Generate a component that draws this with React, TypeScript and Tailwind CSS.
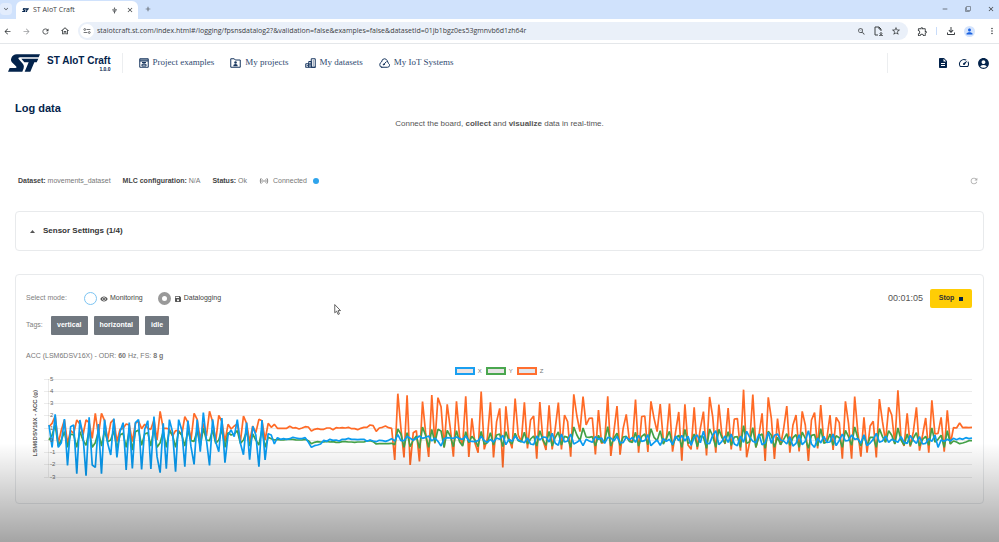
import React, { useState } from "react";
import {
  MdAccountCircle,
  MdArrowBack,
  MdArrowForward,
  MdClose,
  MdDescription,
  MdExpandMore,
  MdMoreVert,
  MdOutlineExtension,
  MdOutlineFileDownload,
  MdOutlineHome,
  MdOutlineSpeed,
  MdPerson,
  MdRefresh,
  MdSave,
  MdSensors,
  MdStarOutline,
  MdUsb,
  MdVisibility,
  MdZoomOut,
  MdAdd,
  MdRemove,
  MdFilterNone,
} from "react-icons/md";

type IconProps = { className?: string };

// Raw plot rows, 240 is 0 g and one g is 36.7 rows
const Z_ROWS = [
  200, 190, 168, 250, 210, 180, 250, 212, 220, 180, 192, 225, 180, 188, 235, 160, 225, 160, 182, 240,
  188, 178, 245, 208, 205, 192, 195, 245, 190, 183, 206, 193, 205, 208, 180, 240, 154, 205, 205, 207,
  228, 212, 212, 225, 170, 187, 240, 160, 178, 240, 190, 228, 154, 185, 245, 166, 185, 245, 193, 207,
  198, 192, 245, 168, 190, 245, 198, 218, 178, 182, 240, 190, 202, 193, 205, 205, 205, 205, 199, 204,
  203, 207, 204, 200, 201, 213, 208, 206, 208, 208, 204, 204, 209, 203, 204, 203, 204, 202, 206, 206,
  209, 205, 202, 202, 195, 197, 214, 204, 202, 198, 203, 205, 300, 101, 205, 292, 106, 315, 218, 212,
  304, 125, 218, 291, 105, 250, 113, 140, 262, 133, 205, 290, 124, 230, 255, 109, 291, 175, 250, 278,
  95, 268, 235, 127, 292, 185, 145, 322, 139, 235, 265, 116, 225, 245, 127, 265, 180, 168, 296, 126,
  240, 270, 136, 268, 205, 128, 268, 165, 185, 290, 103, 168, 215, 110, 195, 175, 174, 283, 150, 250,
  245, 109, 288, 215, 138, 284, 205, 163, 240, 245, 119, 278, 170, 168, 276, 124, 175, 215, 132, 240,
  238, 131, 275, 215, 156, 302, 133, 255, 268, 142, 268, 205, 155, 286, 111, 170, 278, 134, 225, 252,
  144, 268, 177, 176, 272, 89, 292, 245, 104, 262, 225, 160, 303, 112, 175, 297, 176, 255, 205, 138,
  278, 195, 165, 274, 154, 195, 303, 180, 158, 265, 135, 245, 235, 165, 270, 172, 188, 296, 124, 190,
  296, 110, 215, 290, 172, 278, 198, 184, 292, 117, 185, 245, 142, 165, 252, 91, 235, 258, 160, 260,
  215, 142, 272, 225, 174, 278, 121, 222, 220, 172, 275, 151, 252, 203, 204, 189, 203, 202, 203, 202,
];

const Y_ROWS = [
  240, 225, 195, 258, 240, 215, 262, 222, 225, 262, 215, 240, 256, 212, 262, 248, 215, 258, 212, 245,
  240, 212, 265, 225, 220, 262, 212, 270, 215, 210, 256, 222, 218, 258, 205, 262, 248, 215, 262, 212,
  225, 262, 215, 225, 258, 212, 242, 244, 212, 258, 205, 240, 242, 210, 250, 240, 208, 262, 218, 225,
  222, 212, 250, 240, 214, 258, 222, 240, 255, 208, 262, 232, 236, 240, 238, 240, 240, 238, 238, 238,
  240, 240, 240, 238, 242, 251, 247, 245, 246, 246, 244, 246, 245, 247, 247, 245, 245, 246, 246, 247,
  246, 246, 246, 243, 242, 245, 252, 251, 251, 251, 251, 250, 254, 207, 222, 262, 218, 260, 240, 228,
  265, 201, 226, 262, 208, 248, 208, 213, 262, 211, 228, 260, 212, 245, 258, 215, 248, 229, 240, 260,
  214, 253, 248, 218, 255, 225, 222, 260, 215, 243, 252, 220, 242, 246, 217, 252, 237, 228, 258, 212,
  240, 256, 214, 258, 232, 216, 255, 229, 232, 262, 201, 225, 242, 204, 231, 232, 230, 258, 226, 247,
  243, 200, 258, 234, 220, 256, 231, 229, 244, 247, 217, 258, 229, 222, 254, 206, 232, 242, 212, 252,
  235, 214, 256, 234, 226, 262, 208, 250, 246, 222, 260, 228, 231, 265, 207, 228, 262, 208, 233, 250,
  215, 256, 231, 230, 262, 197, 250, 245, 203, 262, 228, 222, 265, 214, 226, 262, 232, 254, 238, 221,
  256, 233, 224, 262, 216, 235, 265, 226, 224, 258, 206, 250, 246, 222, 256, 227, 233, 262, 211, 230,
  256, 201, 234, 258, 226, 257, 232, 232, 262, 206, 230, 247, 212, 226, 252, 204, 240, 255, 222, 256,
  234, 218, 258, 238, 229, 256, 204, 246, 238, 226, 262, 212, 252, 243, 246, 251, 249, 246, 242, 242,
];

const X_ROWS = [
  195, 262, 163, 262, 248, 177, 316, 200, 195, 341, 180, 225, 347, 172, 315, 322, 192, 341, 179, 250,
  285, 176, 292, 215, 188, 330, 188, 325, 188, 179, 328, 208, 182, 327, 170, 290, 338, 190, 326, 179,
  215, 335, 179, 210, 320, 182, 260, 313, 179, 275, 158, 240, 316, 178, 245, 275, 174, 308, 225, 210,
  230, 179, 250, 284, 188, 299, 199, 225, 320, 180, 300, 221, 225, 252, 233, 238, 236, 238, 236, 232,
  234, 236, 236, 233, 246, 262, 257, 255, 252, 241, 244, 238, 241, 240, 243, 238, 238, 235, 238, 238,
  239, 238, 238, 244, 240, 243, 245, 241, 242, 244, 241, 236, 243, 224, 242, 242, 229, 235, 241, 235,
  228, 235, 232, 228, 243, 234, 244, 258, 236, 233, 234, 235, 231, 236, 238, 228, 243, 244, 245, 242,
  229, 242, 247, 238, 246, 234, 238, 226, 254, 238, 244, 228, 240, 244, 248, 234, 252, 254, 228, 240,
  231, 232, 246, 220, 250, 256, 222, 246, 243, 222, 252, 247, 240, 257, 238, 243, 247, 230, 238, 234,
  250, 232, 234, 243, 229, 248, 248, 231, 240, 232, 247, 226, 244, 242, 224, 257, 248, 240, 256, 236,
  244, 238, 254, 228, 242, 226, 243, 229, 256, 232, 225, 248, 214, 250, 251, 226, 212, 254, 244, 228,
  247, 222, 252, 257, 228, 247, 214, 232, 244, 248, 222, 254, 248, 217, 250, 226, 222, 240, 243, 252,
  230, 258, 250, 224, 254, 244, 212, 252, 262, 234, 249, 229, 247, 246, 222, 257, 241, 222, 243, 241,
  225, 238, 236, 250, 224, 257, 249, 238, 220, 247, 243, 228, 247, 238, 242, 247, 230, 247, 250, 226,
  241, 250, 230, 252, 250, 236, 244, 225, 262, 240, 244, 238, 243, 235, 239, 235, 238, 233, 236, 234,
];

const toPoints = (rows: number[]) => rows.map((y, i) => `${i},${y}`).join(" ");

const SERIES = [
  { name: "X", color: "#0a9bf0", border: "border-[#1a9ff0]", fill: "bg-[#eee3e0]", rows: X_ROWS },
  { name: "Y", color: "#43a047", border: "border-[#4aa74f]", fill: "bg-[#e6e3e5]", rows: Y_ROWS },
  { name: "Z", color: "#ff6a26", border: "border-[#ff6f30]", fill: "bg-[#dfe6ee]", rows: Z_ROWS },
];

const TICKS = [5, 4, 3, 2, 1, 0, -1, -2, -3];
const TAGS = ["vertical", "horizontal", "idle"];

function StLogo({ className }: IconProps) {
  return (
    <svg viewBox="0 0 96 54" fill="#03234b" className={className} aria-hidden="true">
      <path d="M26 1H96L92 10H36Q29 10 32 15L45 30Q50 37 47 43L43 53H0L5 42H22Q28 42 24 37L11 24Q7 18 10 12Q15 1 26 1Z" />
      <path d="M40 14H91L86 25H79L67 53H50L62 25H49Z" />
    </svg>
  );
}

function ExamplesIcon() {
  return (
    <svg viewBox="0 0 20 20" fill="none" stroke="#17365f" strokeWidth="2" className="size-[10px]" aria-hidden="true">
      <path d="M1.5 1.5h17v17h-17zM1.5 6h17M6 9h8M10 9v3M6 12.5h8V16H6z" />
      <path d="M2 3h16v2H2z" fill="#17365f" stroke="none" />
    </svg>
  );
}

function ProjectsIcon() {
  return (
    <svg viewBox="0 0 22 20" fill="none" stroke="#17365f" strokeWidth="2" className="h-[10px] w-[11px]" aria-hidden="true">
      <path d="M1.5 18.5v-17h7l2 2.5h10v14.500z" />
      <circle cx="11" cy="9" r="2.5" fill="#17365f" stroke="none" />
      <path d="M6.500 16.500q0-4.500 4.500-4.500t4.500 4.500z" fill="#17365f" stroke="none" />
    </svg>
  );
}

function DatasetsIcon() {
  return (
    <svg viewBox="0 0 22 20" fill="none" stroke="#17365f" strokeWidth="2" className="h-[10px] w-[11px]" aria-hidden="true">
      <path d="M1.5 18.5v-7h6v7M7.5 18.5V7h5v11.500M12.5 18.5v-17h8v17zM1 18.5h20M16.5 5v2M16.5 9v2M16.5 13v2M4.5 14v2M10 10v5" />
    </svg>
  );
}

function SystemsIcon() {
  return (
    <svg viewBox="0 0 22 20" fill="none" stroke="#17365f" strokeWidth="2" strokeLinecap="round" className="h-[10px] w-[11px]" aria-hidden="true">
      <path d="M5.5 18.5h11.500a4 4 0 0 0 2-7.500L16 4.500Q14 1.500 11 1.500Q6 1.500 5 8Q1.500 9.500 1.500 13.500Q1.500 18.500 5.500 18.500zM10 12.500l4.500-5" />
      <circle cx="9.500" cy="13" r="1" />
    </svg>
  );
}

function SiteInfoIcon() {
  return (
    <svg viewBox="0 0 20 16" fill="none" stroke="#47494d" strokeWidth="2" className="h-[6px] w-2" aria-hidden="true">
      <circle cx="4" cy="4" r="2.500" />
      <circle cx="16" cy="12" r="2.500" />
      <path d="M9 4h10M1 12h10" />
    </svg>
  );
}

function InstallPageIcon() {
  return (
    <svg viewBox="0 0 18 20" fill="none" stroke="#3c4043" strokeWidth="2" className="h-[10px] w-[9px]" aria-hidden="true">
      <path d="M8 18H2V2h8l4 4v4M10 2v4h4M14 12v5M11.500 15l2.500 2.500 2.500-2.500M10 19.500h8" />
    </svg>
  );
}

const NAV = [
  { label: "Project examples", icon: <ExamplesIcon /> },
  { label: "My projects", icon: <ProjectsIcon /> },
  { label: "My datasets", icon: <DatasetsIcon /> },
  { label: "My IoT Systems", icon: <SystemsIcon /> },
];

function BrowserBar() {
  return (
    <div className="font-['Open_Sans','Noto_Sans',sans-serif] text-[#3c4043]">
      <div className="flex h-[19px] items-end bg-[#d0e2fc]">
        <button aria-label="Search tabs" className="mb-1 flex size-3 items-center justify-center rounded-sm bg-[#e3edfd]">
          <MdExpandMore className="size-2" />
        </button>
        <div className="ml-1 flex h-[18px] w-[122px] items-center rounded-t-md bg-white pr-1 pl-[6px]">
          <StLogo className="h-1 w-[7px]" />
          <span className="ml-1 flex-1 text-[7px]">ST AIoT Craft</span>
          <MdUsb className="mr-2 size-[7px]" />
          <button aria-label="Close tab">
            <MdClose className="size-[8px]" />
          </button>
        </div>
        <button aria-label="New tab" className="mb-[6px] ml-[6px]">
          <MdAdd className="size-2" />
        </button>
        <div className="mr-1 mb-[6px] ml-auto flex items-center gap-4">
          <button aria-label="Minimize"><MdRemove className="size-2" /></button>
          <button aria-label="Restore"><MdFilterNone className="size-[6px]" /></button>
          <button aria-label="Close"><MdClose className="size-2" /></button>
        </div>
      </div>
      <div className="flex h-[25px] items-center border-b border-[#e4e7ea] bg-white pl-[3px]">
        <div className="flex w-[75px] items-center gap-[10px]">
          <button aria-label="Back"><MdArrowBack className="size-[9px]" /></button>
          <button aria-label="Forward" className="text-[#9a9c9f]"><MdArrowForward className="size-[9px]" /></button>
          <button aria-label="Reload"><MdRefresh className="size-[9px]" /></button>
          <button aria-label="Home"><MdOutlineHome className="size-[10px]" /></button>
        </div>
        <div className="flex h-[18px] flex-1 items-center rounded-full bg-[#eaf0f9] pr-[7px] pl-[2px]">
          <span className="flex size-[14px] items-center justify-center rounded-full bg-white">
            <SiteInfoIcon />
          </span>
          <input
            aria-label="Address"
            className="ml-[3px] min-w-0 flex-1 bg-transparent text-[7px] outline-none"
            defaultValue="staiotcraft.st.com/index.html#/logging/fpsnsdatalog2?&validation=false&examples=false&datasetId=01jb1bgz0es53gmnvb6d1zh64r"
          />
          <div className="flex items-center gap-[8px]">
            <MdZoomOut className="size-[9px]" />
            <InstallPageIcon />
            <MdStarOutline className="size-[10px]" />
          </div>
        </div>
        <div className="mr-[2px] ml-[9px] flex items-center">
          <MdOutlineExtension className="size-[11px]" />
          <span className="mx-[8px] h-2 w-px bg-[#c8dcfa]" />
          <MdOutlineFileDownload className="size-[12px]" />
          <span className="ml-[7px] mr-3 flex size-[11px] items-center justify-center rounded-full bg-[#d3e3fd] text-[#1a62e0]">
            <MdPerson className="size-[9px]" />
          </span>
          <MdMoreVert className="size-[10px]" />
        </div>
      </div>
    </div>
  );
}

function SiteHeader() {
  return (
    <header className="flex h-[38px] items-center pr-[9px] pl-2 text-[#03234b]">
      <StLogo className="h-[18px] w-8" />
      <div className="ml-[7px] flex flex-col items-end">
        <span className="text-[10px] leading-[11px] font-bold">ST AIoT Craft</span>
        <span className="text-[5px] leading-[6px] font-bold">1.0.0</span>
      </div>
      <nav className="ml-[11px] flex h-5 items-center gap-4 border-l border-[#eceef0] pl-4 font-['Liberation_Serif',serif] text-[9px] text-[#2f4a70]">
        {NAV.map((item) => (
          <a key={item.label} href="#" className="flex items-center gap-[4px] whitespace-nowrap">
            {item.icon}
            {item.label}
          </a>
        ))}
      </nav>
      <div className="ml-auto flex h-5 items-center justify-end gap-[9px] border-l border-[#eceef0] pl-[49px]">
        <MdDescription className="size-[12px]" />
        <MdOutlineSpeed className="size-[12px]" />
        <MdAccountCircle className="-ml-[2px] size-[13px]" />
      </div>
    </header>
  );
}

function AccChart() {
  return (
    <div className="flex">
      <div className="flex w-[18px] items-center justify-center pb-[10px]">
        <span className="rotate-180 text-[6px] leading-[8px] font-bold whitespace-nowrap text-[#555] [writing-mode:vertical-rl]">
          LSM6DSV16X - ACC (g)
        </span>
      </div>
      <div className="relative h-[98px] flex-1">
        <div className="flex h-full flex-col justify-between">
          {TICKS.map((t) => (
            <div key={t} className="flex h-0 items-center">
              <span className="h-px flex-1 bg-black/8" />
            </div>
          ))}
        </div>
        <div className="absolute inset-y-0 right-0 left-1 border-l border-black/8">
          <svg viewBox="0 57 299 294" preserveAspectRatio="none" className="size-full overflow-visible" role="img" aria-label="Acceleration over time">
            {[...SERIES].reverse().map((s) => (
              <polyline
                key={s.name}
                points={toPoints(s.rows)}
                fill="none"
                stroke={s.color}
                strokeWidth="1.7"
                strokeLinejoin="bevel"
                vectorEffect="non-scaling-stroke"
              />
            ))}
          </svg>
        </div>
        <div className="absolute inset-y-0 left-[6px] flex flex-col justify-between text-[6px] text-[#666]">
          {TICKS.map((t) => (
            <span key={t} className="flex h-0 items-center">{t}</span>
          ))}
        </div>
      </div>
    </div>
  );
}

export default function App() {
  const [mode, setMode] = useState("datalogging");
  const [open, setOpen] = useState(false);

  return (
    <div className="relative flex min-h-screen flex-col overflow-hidden bg-white font-['Liberation_Sans',Arial,sans-serif]">
      <BrowserBar />
      <SiteHeader />

      <main className="flex-1 px-[15px] pt-[19px] pb-[39px]">
        <h1 className="text-[11px] leading-[14px] font-bold text-[#03234b]">Log data</h1>
        <p className="mt-[3px] text-center text-[8px] leading-[12px] text-[#555]">
          Connect the board, <b>collect</b> and <b>visualize</b> data in real-time.
        </p>

        <div className="mt-11 flex h-[14px] items-center gap-3 pr-[5px] pl-[3px] text-[7px] text-[#777]">
          <span><b className="text-[#444]">Dataset:</b> movements_dataset</span>
          <span><b className="text-[#444]">MLC configuration:</b> N/A</span>
          <span><b className="text-[#444]">Status:</b> Ok</span>
          <span className="flex items-center gap-1">
            <MdSensors className="size-[10px]" />
            Connected
            <span className="ml-[2px] size-[6px] rounded-full bg-[#2fa4ec]" />
          </span>
          <button aria-label="Refresh" className="ml-auto text-[#aaa]">
            <MdRefresh className="size-[10px]" />
          </button>
        </div>

        <section className="mt-[23px] rounded-sm border border-[#e8eaec]">
          <button
            aria-expanded={open}
            onClick={() => setOpen(!open)}
            className="flex h-[38px] w-full items-center gap-2 pl-[14px] text-[8px] font-bold text-[#333]"
          >
            <svg viewBox="0 0 10 6" className="h-[3px] w-[5px]" fill="#555" aria-hidden="true">
              <path d="M0 6L5 0L10 6Z" />
            </svg>
            Sensor Settings (1/4)
          </button>
        </section>

        <section className="mt-[23px] rounded-sm border border-[#e8eaec] pr-[11px] pb-[26px] pl-[10px]">
          <div className="mt-[14px] flex h-[19px] items-center text-[7px]">
            <span className="w-[58px] text-[#808080]">Select mode:</span>
            <label className="flex items-center">
              <input
                type="radio"
                name="mode"
                checked={mode === "monitoring"}
                onChange={() => setMode("monitoring")}
                className="mr-[3px] size-[13px] appearance-none rounded-full border border-[#7cc4f2] bg-white checked:border-4 checked:border-[#999]"
              />
              <MdVisibility className="mr-[2px] size-[8px] text-[#555]" />
              <span className="text-[#444]">Monitoring</span>
            </label>
            <label className="ml-[15px] flex items-center">
              <input
                type="radio"
                name="mode"
                checked={mode === "datalogging"}
                onChange={() => setMode("datalogging")}
                className="mr-[3px] size-[13px] appearance-none rounded-full border border-[#7cc4f2] bg-white checked:border-4 checked:border-[#999]"
              />
              <MdSave className="mr-[2px] size-[8px] text-[#555]" />
              <span className="text-[#444]">Datalogging</span>
            </label>
            <span className="ml-auto text-[9px] text-[#555]">00:01:05</span>
            <button className="ml-[7px] flex h-[19px] w-[42px] items-center justify-center gap-[5px] rounded-[2px] bg-[#ffcd05] text-[7px] font-bold text-[#333]">
              Stop
              <span className="size-1 bg-[#03234b]" />
            </button>
          </div>

          <div className="mt-2 flex h-[19px] items-center text-[7px]">
            <span className="w-[25px] text-[#808080]">Tags:</span>
            <div className="flex gap-[6px]">
              {TAGS.map((tag) => (
                <button key={tag} className="h-[19px] rounded-[1px] bg-[#70777f] px-[6px] font-bold text-white">
                  {tag}
                </button>
              ))}
            </div>
          </div>

          <p className="mt-4 text-[7px] leading-[10px] text-[#777]">
            ACC (LSM6DSV16X) - ODR: <b>60</b> Hz, FS: <b>8 g</b>
          </p>

          <div className="mt-[6px] mb-1 flex h-2 items-center justify-center gap-1 text-[6px] text-[#777]">
            {SERIES.map((s) => (
              <span key={s.name} className="flex items-center gap-[3px]">
                <span className={`h-2 w-5 border-2 ${s.border} ${s.fill}`} />
                {s.name}
              </span>
            ))}
          </div>

          <AccChart />
        </section>
      </main>

      {/* fade over the lower edge of the page */}
      <div className="pointer-events-none absolute inset-x-0 bottom-0 h-[100px] bg-linear-to-b from-black/0 to-black/36" />

      <svg viewBox="0 0 12 20" className="pointer-events-none absolute top-[304px] left-[334px] h-[11px] w-[7px]" aria-hidden="true">
        <path d="M1 1V16L4.500 13L7 19L9.500 18L7 12H11.500Z" fill="#fff" stroke="#444" strokeWidth="1.500" />
      </svg>
    </div>
  );
}
